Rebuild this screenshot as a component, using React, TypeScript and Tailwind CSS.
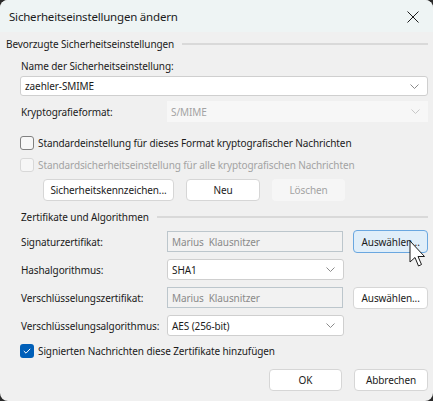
import React from "react";

const font = { fontFamily: '"Noto Sans", "Open Sans", sans-serif' };

function Chevron({ muted }: { muted?: boolean }) {
  return (
    <svg width="9" height="5" viewBox="0 0 9 5" className="shrink-0">
      <path d="M0.5 0.5 L4.5 4.5 L8.5 0.5" fill="none" stroke={muted ? "#c8c8c8" : "#8a8a8a"} strokeWidth="1" />
    </svg>
  );
}

function Combo({ value, className = "" }: { value: string; className?: string }) {
  return (
    <div className={`flex h-[20px] items-center justify-between rounded-[3px] border border-[#cfcfcf] bg-white pl-[4px] pr-[8px] text-[#1b1b1b] ${className}`}>
      <span>{value}</span>
      <Chevron />
    </div>
  );
}

function Button({ label, className = "", disabled, hover }: { label: string; className?: string; disabled?: boolean; hover?: boolean }) {
  const look = disabled
    ? "border-transparent bg-[#f6f6f6] text-[#a3a3a3]"
    : hover
      ? "border-[#6aa7e0] bg-[#e0eef9] text-[#1b1b1b]"
      : "border-[#d6d6d6] bg-white text-[#1b1b1b]";
  return (
    <div className={`flex h-[22px] items-center justify-center rounded-[4px] border ${look} ${className}`}>{label}</div>
  );
}

function CertBox({ value }: { value: string }) {
  return (
    <div className="flex h-[21px] w-[177px] items-center border border-[#bcc6cc] bg-[#f2f2f2] pl-[4px] whitespace-pre text-[#8a8a8a]">
      {value}
    </div>
  );
}

function Check({ checked, disabled, label, className = "" }: { checked?: boolean; disabled?: boolean; label: string; className?: string }) {
  return (
    <div className={`flex h-[14px] items-center gap-[4px] pl-[20px] ${disabled ? "text-[#a3a3a3]" : "text-[#1b1b1b]"} ${className}`}>
      {checked ? (
        <div className="flex h-[14px] w-[14px] shrink-0 items-center justify-center rounded-[3px] bg-[#005fb8]">
          <svg width="8" height="6" viewBox="0 0 8 6">
            <path d="M0.8 3 L3 5.2 L7.2 0.8" fill="none" stroke="white" strokeWidth="1" />
          </svg>
        </div>
      ) : (
        <div className={`h-[14px] w-[14px] shrink-0 rounded-[3px] border ${disabled ? "border-[#d8d8d8] bg-[#f6f6f6]" : "border-[#808080] bg-[#f7f7f7]"}`} />
      )}
      <span className="whitespace-nowrap">{label}</span>
    </div>
  );
}

function GroupTitle({ label, className = "" }: { label: string; className?: string }) {
  return (
    <div className={`flex h-[14px] items-center gap-[8px] ${className}`}>
      <span className="whitespace-nowrap text-[#1b1b1b]">{label}</span>
      <div className="h-[2px] flex-1 bg-[#d9d9d9]" />
    </div>
  );
}

function Row({ label, children, className = "" }: { label: string; children: React.ReactNode; className?: string }) {
  return (
    <div className={`flex h-[23px] items-center pl-[21px] ${className}`}>
      <span className="w-[146px] shrink-0 whitespace-nowrap text-[#1b1b1b]">{label}</span>
      {children}
    </div>
  );
}

export default function App() {
  return (
    <div className="h-[401px] w-[433px] bg-[#2a2a2a]" style={font}>
      <div className="relative flex h-[401px] w-[433px] flex-col overflow-hidden rounded-[8px] bg-[#f0f0f0] text-[10px] leading-[14px] tracking-[-0.1px]">
        <div className="flex h-[32px] shrink-0 items-center justify-between bg-[#eef4f4] pl-[9px] pr-[14px] pt-[1px]">
          <span className="text-[11.5px] tracking-[-0.2px] text-[#1b1b1b]">Sicherheitseinstellungen ändern</span>
          <svg width="12" height="12" viewBox="0 0 12 12">
            <path d="M0.5 0.5 L11.5 11.5 M11.5 0.5 L0.5 11.5" stroke="#1b1b1b" strokeWidth="1" />
          </svg>
        </div>

        <div className="flex flex-col pr-[5px]">
          <GroupTitle label="Bevorzugte Sicherheitseinstellungen" className="mt-[5px] pl-[6px]" />
          <span className="mt-[8px] pl-[21px] text-[#1b1b1b]">Name der Sicherheitseinstellung:</span>
          <Combo value="zaehler-SMIME" className="ml-[20px] mt-[3px]" />

          <div className="mt-[5px] flex h-[21px] items-center pl-[21px]">
            <span className="w-[146px] shrink-0 text-[#1b1b1b]">Kryptografieformat:</span>
            <div className="flex h-[21px] flex-1 items-center justify-between bg-[#f7f7f7] pl-[4px] pr-[8px] text-[#a3a3a3]">
              <span>S/MIME</span>
              <Chevron muted />
            </div>
          </div>

          <Check className="mt-[14px]" label="Standardeinstellung für dieses Format kryptografischer Nachrichten" />
          <Check className="mt-[8px]" disabled label="Standardsicherheitseinstellung für alle kryptografischen Nachrichten" />

          <div className="mt-[7px] flex gap-[12px] pl-[43px]">
            <Button label="Sicherheitskennzeichen..." className="w-[131px]" />
            <Button label="Neu" className="w-[74px]" />
            <Button label="Löschen" disabled className="w-[73px]" />
          </div>

          <GroupTitle label="Zertifikate und Algorithmen" className="mt-[9px] pl-[21px]" />

          <div className="mt-[6px] flex flex-col gap-[5px]">
            <Row label="Signaturzertifikat:">
              <CertBox value="Marius  Klausnitzer" />
              <Button label="Auswählen..." hover className="ml-[10px] h-[23px] w-[75px]" />
            </Row>
            <Row label="Hashalgorithmus:">
              <Combo value="SHA1" className="h-[21px] w-[177px]" />
            </Row>
            <Row label="Verschlüsselungszertifikat:">
              <CertBox value="Marius  Klausnitzer" />
              <Button label="Auswählen..." className="ml-[10px] w-[75px]" />
            </Row>
            <Row label="Verschlüsselungsalgorithmus:">
              <Combo value="AES (256-bit)" className="h-[21px] w-[177px]" />
            </Row>
          </div>

          <Check className="mt-[7px]" checked label="Signierten Nachrichten diese Zertifikate hinzufügen" />

          <div className="mt-[11px] flex justify-end gap-[12px]">
            <Button label="OK" className="w-[73px]" />
            <Button label="Abbrechen" className="w-[74px]" />
          </div>
        </div>

        <svg className="absolute left-[409px] top-[240px]" width="20" height="30" viewBox="0 0 20 30">
          <path d="M1 1 L1 22 L6 17.5 L9.5 26 L12.5 24.5 L9 16.5 L15.5 16.5 Z" fill="white" stroke="#1b1b1b" strokeWidth="1" strokeLinejoin="round" />
        </svg>
      </div>
    </div>
  );
}
